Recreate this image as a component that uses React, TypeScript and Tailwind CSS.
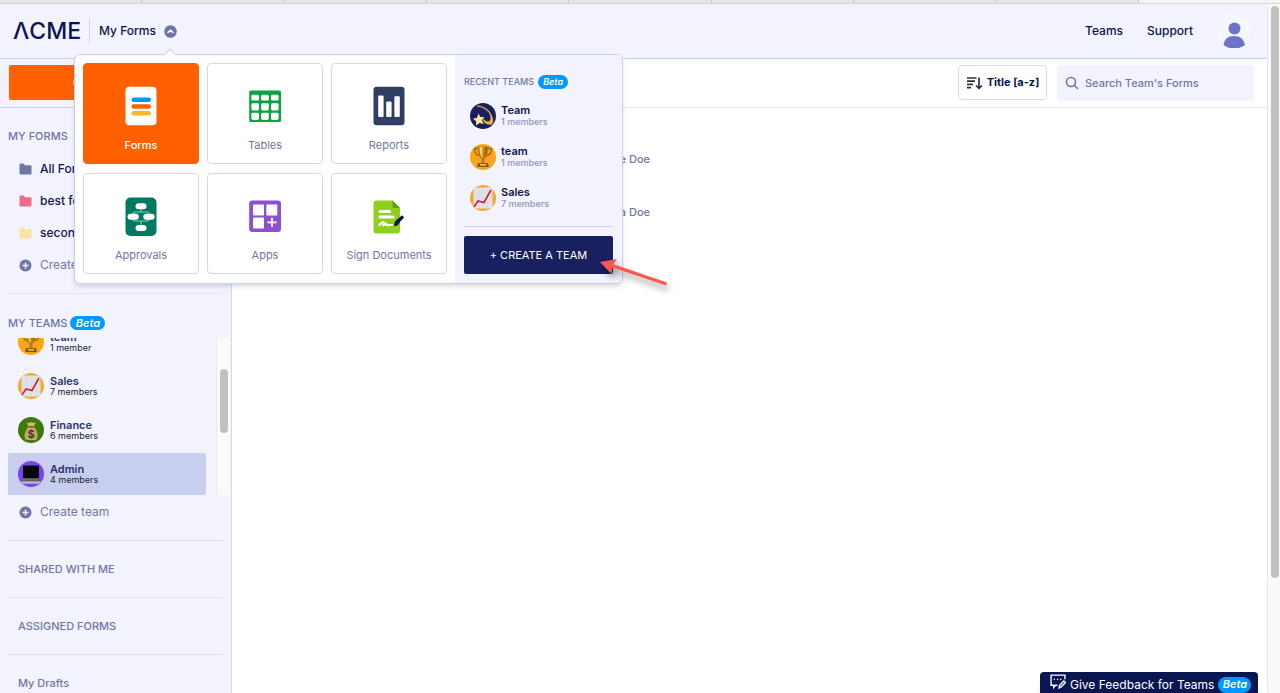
import type { ReactNode } from "react";
import clsx from "clsx";

type TeamIcon = "star" | "trophy" | "chart" | "money" | "laptop";

type Team = {
  name: string;
  members: string;
  icon: TeamIcon;
  active?: boolean;
};

const browserTabs = [1, 2, 3, 4, 5, 6, 7, 8];

const folders = [
  { name: "All Forms", color: "text-[#6f76a7]" },
  { name: "best forms", color: "text-[#ec6a8c]" },
  { name: "second", color: "text-[#fbe3a0]" }
];

const recentTeams: Team[] = [
  { name: "Team", members: "1 members", icon: "star" },
  { name: "team", members: "1 members", icon: "trophy" },
  { name: "Sales", members: "7 members", icon: "chart" }
];

const myTeams: Team[] = [
  { name: "team", members: "1 member", icon: "trophy" },
  { name: "Sales", members: "7 members", icon: "chart" },
  { name: "Finance", members: "6 members", icon: "money" },
  { name: "Admin", members: "4 members", icon: "laptop", active: true }
];

const products: { name: string; icon: ReactNode; active?: boolean }[] = [
  { name: "Forms", icon: <FormsIcon />, active: true },
  { name: "Tables", icon: <TablesIcon /> },
  { name: "Reports", icon: <ReportsIcon /> },
  { name: "Approvals", icon: <ApprovalsIcon /> },
  { name: "Apps", icon: <AppsIcon /> },
  { name: "Sign Documents", icon: <SignIcon /> }
];

function FormsIcon() {
  return (
    <svg width="40" height="40" viewBox="0 0 40 40" aria-hidden="true">
      <rect x="4.5" y="0.8" width="31" height="38.5" rx="4" fill="#fff" />
      <rect x="10.5" y="11.5" width="19.5" height="4.4" rx="2.2" fill="#0099ff" />
      <rect x="10.5" y="18.3" width="19.5" height="4.4" rx="2.2" fill="#ff6100" />
      <rect x="10.5" y="25.1" width="19.5" height="4.4" rx="2.2" fill="#ffb629" />
    </svg>
  );
}

function TablesIcon() {
  const cells = [6.4, 16.2, 26];
  const rows = [8.8, 17.2, 26.8];
  return (
    <svg width="40" height="40" viewBox="0 0 40 40" aria-hidden="true">
      <rect x="4.2" y="4.6" width="31.8" height="31.4" rx="1.5" fill="#09a340" />
      {rows.map((y, i) =>
        cells.map((x) => (
          <rect key={`${x}-${y}`} x={x} y={y} width="7.6" height={i === 0 ? 5.800 : 7.2} rx="1.4" fill="#fff" />
        ))
      )}
    </svg>
  );
}

function ReportsIcon() {
  return (
    <svg width="40" height="40" viewBox="0 0 40 40" aria-hidden="true">
      <rect x="4.5" y="0.8" width="31" height="38.5" rx="3" fill="#303e64" />
      <rect x="9.2" y="9.5" width="5.4" height="21.5" rx="1" fill="#fff" />
      <rect x="17.2" y="15.5" width="5.4" height="15.5" rx="1" fill="#fff" />
      <rect x="25.4" y="10.3" width="5.4" height="20.7" rx="1" fill="#fff" />
    </svg>
  );
}

function ApprovalsIcon() {
  return (
    <svg width="40" height="40" viewBox="0 0 40 40" aria-hidden="true">
      <rect x="4.5" y="1.5" width="31" height="38.5" rx="5" fill="#017861" />
      <path
        d="M20 11v4.500M20 25v4M12 20v-1.500q0-2.500 2.500-2.500h11q2.500 0 2.500 2.500V20M12 21v1.500q0 2.500 2.500 2.500h11q2.500 0 2.500-2.500V21"
        fill="none"
        stroke="#4cb695"
        strokeWidth="1.700"
      />
      <rect x="14.500" y="7.200" width="11" height="6" rx="3" fill="#fff" />
      <rect x="6.500" y="17.800" width="11.300" height="6" rx="3" fill="#fff" />
      <rect x="22.300" y="17.800" width="11.300" height="6" rx="3" fill="#fff" />
      <rect x="14.500" y="29" width="11" height="6" rx="3" fill="#fff" />
    </svg>
  );
}

function AppsIcon() {
  return (
    <svg width="40" height="40" viewBox="0 0 40 40" aria-hidden="true">
      <rect x="4.2" y="4.400" width="31.8" height="31.600" rx="3" fill="#8d4fce" />
      <rect x="8" y="8.400" width="11" height="11" rx="1" fill="#fff" />
      <rect x="21.300" y="8.400" width="11" height="11" rx="1" fill="#fff" />
      <rect x="8" y="21.600" width="11" height="11" rx="1" fill="#fff" />
      <path d="M27 21.800v9M22.500 26.300h9" stroke="#fff" strokeWidth="1.800" />
    </svg>
  );
}

function SignIcon() {
  return (
    <svg width="40" height="40" viewBox="0 0 40 40" aria-hidden="true">
      <path d="M7.500 4.500H23.500L31 12V34.500a3 3 0 0 1-3 3H7.500a3 3 0 0 1-3-3V7.500a3 3 0 0 1 3-3Z" fill="#90cf1e" />
      <path d="M23.500 4.500 31 12H25a1.500 1.500 0 0 1-1.500-1.500Z" fill="#5f9e10" />
      <path d="M11 15.500h9.500M11 21h13" stroke="#fff" strokeWidth="3" strokeLinecap="round" />
      <path
        d="M10.500 29q3.500-4 4.500-2.500t-1.500 3.500q3.500-3 4.500-1.500t2 .5h3"
        fill="none"
        stroke="#fff"
        strokeWidth="2.200"
        strokeLinecap="round"
      />
      <path d="M33 21.500 27.500 26.500" stroke="#0a1551" strokeWidth="3.600" strokeLinecap="round" />
      <path d="M28 23.500 25.500 27 25 30.300 28.300 29.500 31 26.500Z" fill="#0a1551" />
    </svg>
  );
}

function TeamAvatar({ icon }: { icon: TeamIcon }) {
  return (
    <svg className="shrink-0 overflow-hidden rounded-full" width="26" height="26" viewBox="0 0 26 26" aria-hidden="true">
      {icon === "star" && (
        <>
          <rect width="26" height="26" fill="#182060" />
          <path d="M7 3C18 4 23 12 22.500 20" fill="none" stroke="#d99a3a" strokeWidth="1.400" />
          <path d="M12 15c1.500 5 5 7.500 10 6.500 1.500-4 .5-8-3-12 2 5 2 7 0 9-2.500.5-4-1-7-3.500Z" fill="#f1ac3f" />
          <path d="m8.500 10.500 1.800 3.600 4.200-.2-2.600 3.200 1.800 4-4.200-1.200L6 22.500l.2-4.200L3 15.700l4-1Z" fill="#ffe49b" />
        </>
      )}
      {icon === "trophy" && (
        <>
          <rect width="26" height="26" fill="#f9a61a" />
          <path d="M8 4.500H4.500q0 6 5 7.500M18 4.500h3.500q0 6-5 7.500" fill="none" stroke="#a9690d" strokeWidth="1.500" />
          <path d="M7.500 2.500h11q0 9.500-4 12.500v4h-3v-4q-4-3-4-12.500Z" fill="#c07c16" />
          <path d="M9.500 3h3v11q-3-3-3-11Z" fill="#f7d373" />
          <path d="M15.500 3h1.500q0 7-2 10Z" fill="#8a5209" />
          <path d="M8 19h10l1 4H7Z" fill="#8b5814" />
          <path d="M10 20h6v1.600h-6Z" fill="#edc56b" />
        </>
      )}
      {icon === "chart" && (
        <>
          <rect width="26" height="26" fill="#f9a825" />
          <rect x="3.500" y="2.500" width="19" height="21" rx="2.500" fill="#dfe3ec" />
          <path d="M8.500 3v20M13 3v20M17.500 3v20M4 8h18M4 13h18M4 18h18" stroke="#cdd2df" strokeWidth=".5" />
          <path d="m4 22 4-6 6 1.500L21 5" fill="none" stroke="#cf202c" strokeWidth="1.600" />
        </>
      )}
      {icon === "money" && (
        <>
          <rect width="26" height="26" fill="#3c7a0b" />
          <path d="m8.500 5.500 2 .5L13 5l2.500 1 2.500-.5-2.500 4h-5Z" fill="#d9b56e" />
          <path d="M10.500 9.500h5Q20 14 19.500 19t-3.500 4h-6Q6.500 23 6.500 19t4-9.500Z" fill="#cfa65b" />
          <path d="M10.500 9.700h5" stroke="#7e4e19" strokeWidth="1.500" />
          <text x="13" y="20.500" textAnchor="middle" fontSize="11" fontWeight="700" fill="#303840">
            $
          </text>
        </>
      )}
      {icon === "laptop" && (
        <>
          <rect width="26" height="26" fill="#7746f2" />
          <rect x="5" y="4.500" width="16" height="12.500" rx="1" fill="#08080b" />
          <path d="M4.500 17h17l1 5h-19Z" fill="#55575f" />
          <path d="M5 18.700h16" stroke="#9c9da3" strokeWidth=".8" strokeDasharray="1 1" />
          <path d="M3.500 20.200h19v2.500h-19Z" fill="#b7b8bf" />
        </>
      )}
    </svg>
  );
}

function FolderIcon({ className }: { className: string }) {
  return (
    <svg className={clsx("shrink-0", className)} width="13" height="12" viewBox="0 0 13 12" fill="currentColor" aria-hidden="true">
      <path d="M1.500.5h3L6 2.200h5.500a1 1 0 0 1 1 1v7.300a1 1 0 0 1-1 1h-10a1 1 0 0 1-1-1v-9a1 1 0 0 1 1-1Z" />
    </svg>
  );
}

function PlusCircle() {
  return (
    <svg className="shrink-0" width="13" height="13" viewBox="0 0 13 13" aria-hidden="true">
      <circle cx="6.500" cy="6.500" r="6" fill="#6f76a7" />
      <path d="M6.500 3.500v6M3.500 6.500h6" stroke="#f3f3fe" strokeWidth="1.500" />
    </svg>
  );
}

function BetaBadge({ className }: { className?: string }) {
  return (
    <span
      className={clsx(
        "inline-flex items-center justify-center rounded-full bg-[#0099ff] font-semibold text-white italic",
        className
      )}
    >
      Beta
    </span>
  );
}

function Header() {
  return (
    <header className="flex h-[55px] shrink-0 items-center border-b border-[#c8ceed] bg-[#f3f3fe] pr-4 pl-[13px]">
      <a href="#" aria-label="ACME" className="text-[23px] leading-6 font-medium">
        ΛCME
      </a>
      <span className="ml-2 h-[26px] w-px bg-[#d3d7ee]" />
      <button type="button" className="ml-[9px] flex items-center gap-2 text-xs font-medium">
        My Forms
        <svg width="13" height="13" viewBox="0 0 13 13" aria-hidden="true">
          <circle cx="6.500" cy="6.500" r="6.300" fill="#6f76a7" />
          <path d="m4 7.500 2.500-2.300L9 7.500" fill="none" stroke="#fff" strokeWidth="1.500" strokeLinecap="round" />
        </svg>
      </button>
      <nav className="ml-auto flex items-center gap-6 text-xs font-medium">
        <a href="#">Teams</a>
        <a href="#">Support</a>
      </nav>
      <button type="button" aria-label="Account" className="ml-6">
        <svg width="34" height="34" viewBox="0 0 34 34" aria-hidden="true">
          <circle cx="17" cy="17" r="17" fill="#f4f7ff" />
          <circle cx="17.500" cy="14.500" r="6" fill="#6c73c9" />
          <path d="M6.500 31q1-9 10.500-9t11 9q-4.500 3.500-11 3.500T6.500 31Z" fill="#6c73c9" />
        </svg>
      </button>
    </header>
  );
}

function Sidebar() {
  return (
    <aside className="w-[232px] shrink-0 border-r border-[#d3d8f0] bg-[#f3f3fe] text-xs">
      <div className="h-[49px] border-b border-[#c8ceed] px-[9px] pt-1.5">
        <button type="button" className="h-[35px] w-full rounded-xs bg-[#ff6100] text-xs font-semibold text-white">
          CREATE FORM
        </button>
      </div>

      <h2 className="mt-4 flex h-6 items-center pl-2 text-[11px] font-medium text-[#6f76a7]">MY FORMS</h2>
      <ul className="mt-[5px]">
        {folders.map((folder) => (
          <li key={folder.name}>
            <a href="#" className="flex h-8 items-center gap-2 pl-[19px] font-medium">
              <FolderIcon className={folder.color} />
              {folder.name}
            </a>
          </li>
        ))}
      </ul>
      <button type="button" className="flex h-8 items-center gap-2 pl-[19px] text-[#6f76a7]">
        <PlusCircle />
        Create folder
      </button>
      <hr className="mx-2 mt-3 border-[#e2e3f1]" />

      <h2 className="mt-[17px] flex h-6 items-center gap-[3px] pl-2 text-[11px] font-medium text-[#6f76a7]">
        MY TEAMS
        <BetaBadge className="h-[14px] w-[35px] text-[11px]" />
      </h2>
      <div className="mt-[3px] mr-px flex h-[157px] gap-2.5 overflow-hidden pl-2">
        <ul className="flex flex-1 flex-col justify-end gap-0.5">
          {myTeams.map((team) => (
            <li key={team.name}>
              <a
                href="#"
                className={clsx("flex h-[42px] items-center gap-1.5 rounded-xs pl-2.5", team.active && "bg-[#c8ceed]")}
              >
                <TeamAvatar icon={team.icon} />
                <span className="flex flex-col">
                  <span className="text-[11px] leading-3 font-semibold text-[#2b3270]">{team.name}</span>
                  <span className="text-[9px] leading-[10px] text-[#20232f]">{team.members}</span>
                </span>
              </a>
            </li>
          ))}
        </ul>
        <div className="w-[14px] shrink-0 border-l border-[#ebebee] bg-[#fafafa] px-[3px] pt-[31px]">
          <div className="h-16 w-2 rounded-full bg-[#c1c1c1]" />
        </div>
      </div>
      <button type="button" className="flex h-[34px] items-center gap-2 pl-[19px] text-[#6f76a7]">
        <PlusCircle />
        Create team
      </button>

      <hr className="mx-2 mt-[11px] border-[#dcdde9]" />
      <a href="#" className="flex h-14 items-center pl-[18px] text-[11px] font-medium text-[#6f76a7]">
        SHARED WITH ME
      </a>
      <hr className="mx-2 border-[#e2e3f1]" />
      <a href="#" className="flex h-14 items-center pl-[18px] text-[11px] font-medium text-[#6f76a7]">
        ASSIGNED FORMS
      </a>
      <hr className="mx-2 border-[#dcdde9]" />
      <a href="#" className="flex h-14 items-center pl-[18px] text-[11px] font-medium text-[#6f76a7]">
        My Drafts
      </a>
    </aside>
  );
}

function Content() {
  return (
    <main className="min-w-0 flex-1">
      <div className="flex h-[49px] items-start justify-end gap-2.5 border-b border-[#e0e3fb] pt-1.5 pr-[13px]">
        <button
          type="button"
          className="flex h-[35px] w-[89px] items-center justify-center gap-1 rounded-sm border border-[#d8dbf0] text-[11px] font-bold"
        >
          <svg width="17" height="14" viewBox="0 0 17 14" fill="none" stroke="#2d3148" strokeWidth="1.700" aria-hidden="true">
            <path d="M1 2h9.500M1 5.200h8M1 8.400h6M1 11.600h4M13 1.500v10.500M10 9.500l3 2.900 3-2.900" />
          </svg>
          Title [a-z]
        </button>
        <label className="flex h-9 w-[197px] items-center gap-1.5 rounded-sm bg-[#f3f3fe] px-2">
          <svg className="shrink-0" width="14" height="14" viewBox="0 0 14 14" fill="none" stroke="#6f76a7" strokeWidth="1.600" aria-hidden="true">
            <circle cx="6" cy="6" r="4.500" />
            <path d="m9.300 9.300 3.700 3.700" />
          </svg>
          <input
            type="search"
            aria-label="Search Team's Forms"
            placeholder="Search Team's Forms"
            className="w-full min-w-0 bg-transparent text-[11px] font-medium outline-none placeholder:text-[#6f76a7]"
          />
        </label>
      </div>
      <ul className="w-[418px] pt-[25px] text-right text-[11px] font-medium text-[#6f76a7]">
        <li className="h-[53px] leading-[53px]">Jane Doe</li>
        <li className="h-[53px] leading-[53px]">Anna Doe</li>
      </ul>
    </main>
  );
}

function ProductMenu() {
  return (
    <div className="absolute top-[50px] left-[74px] w-[549px] rounded-md border border-[#c8ceed] bg-white shadow-md">
      <span className="absolute -top-[5px] left-[91px] size-2 rotate-45 border-t border-l border-[#c8ceed] bg-white" />
      <div className="flex">
        <div className="grid flex-1 grid-cols-3 gap-2 p-2">
          {products.map((product) => (
            <button
              key={product.name}
              type="button"
              className={clsx(
                "flex h-[101px] flex-col items-center gap-[11px] rounded-sm border pt-[22px] text-[11px] leading-4",
                product.active
                  ? "border-[#ff6100] bg-[#ff6100] font-medium text-white"
                  : "border-[#d3d8f0] text-[#6f76a7]"
              )}
            >
              {product.icon}
              {product.name}
            </button>
          ))}
        </div>
        <div className="w-[167px] rounded-r-md bg-[#f3f3fe] px-[9px] pt-[19px] pb-[9px]">
          <h2 className="flex h-4 items-center gap-1 text-[9px] font-medium text-[#6f76a7]">
            RECENT TEAMS
            <BetaBadge className="h-[14px] w-[30px] text-[9px]" />
          </h2>
          <ul className="mt-[5px]">
            {recentTeams.map((team) => (
              <li key={team.name}>
                <a href="#" className="flex h-[41px] items-center gap-1 pl-1.5">
                  <TeamAvatar icon={team.icon} />
                  <span className="flex flex-col pl-px">
                    <span className="text-[11px] leading-3 font-semibold">{team.name}</span>
                    <span className="text-[9px] leading-[11px] font-medium text-[#8f95bb]">{team.members}</span>
                  </span>
                </a>
              </li>
            ))}
          </ul>
          <hr className="mt-2 border-[#c8ceed]" />
          <button type="button" className="mt-[9px] h-[38px] w-full rounded-xs bg-[#182060] text-[11px] text-white">
            + CREATE A TEAM
          </button>
        </div>
      </div>
      <svg
        className="absolute top-[200px] left-[520px] drop-shadow-[2px_5px_3px_rgba(0,0,0,0.4)]"
        width="76"
        height="34"
        viewBox="0 0 76 34"
        aria-hidden="true"
      >
        <path d="M5 7 22 4l-3.500 5.200L72 27.500l-1 3L17.500 12.500l-1 6.500Z" fill="#f9594b" />
      </svg>
    </div>
  );
}

export default function App() {
  return (
    <div className="flex h-screen flex-col overflow-hidden bg-white font-['Inter','Liberation_Sans',sans-serif] text-[#0a1551]">
      <div className="flex h-1 shrink-0 border-b border-[#d5d5d5] bg-[#e6e6e6]">
        {browserTabs.map((tab) => (
          <span key={tab} className="flex-1 border-r border-[#c6c6c6]" />
        ))}
        <span className="flex-1 bg-[#f4f4f4]" />
      </div>
      <div className="relative flex min-h-0 flex-1">
        <div className="flex min-w-0 flex-1 flex-col">
          <Header />
          <div className="flex min-h-0 flex-1">
            <Sidebar />
            <Content />
          </div>
        </div>
        <div className="w-[13px] shrink-0 border-l border-[#e8e8e8] bg-[#fafafa] pt-0.5 pl-[3px]">
          <div className="h-[572px] w-2 rounded-full bg-[#c1c1c1]" />
        </div>
        <ProductMenu />
        <button
          type="button"
          className="absolute right-[22px] -bottom-1 flex h-[25px] w-[218px] items-center gap-1 rounded-t-sm bg-[#0a1551] pl-2.5 text-xs text-white shadow-lg"
        >
          <svg className="mb-1.5 shrink-0" width="16" height="15" viewBox="0 0 15 14" fill="none" stroke="#fff" strokeWidth="1.300" aria-hidden="true">
            <path d="M7 10.500H5L3.500 12.500V10.500H1V1h13v4M3.500 5h1.200M6.500 5h1.200M9.500 5h1.200" />
            <path d="m8.500 13 .5-2.500 4-4 1.500 1.500-4 4Z" />
          </svg>
          Give Feedback for Teams
          <BetaBadge className="h-4 w-[33px] shrink-0 text-[11px]" />
        </button>
      </div>
    </div>
  );
}
